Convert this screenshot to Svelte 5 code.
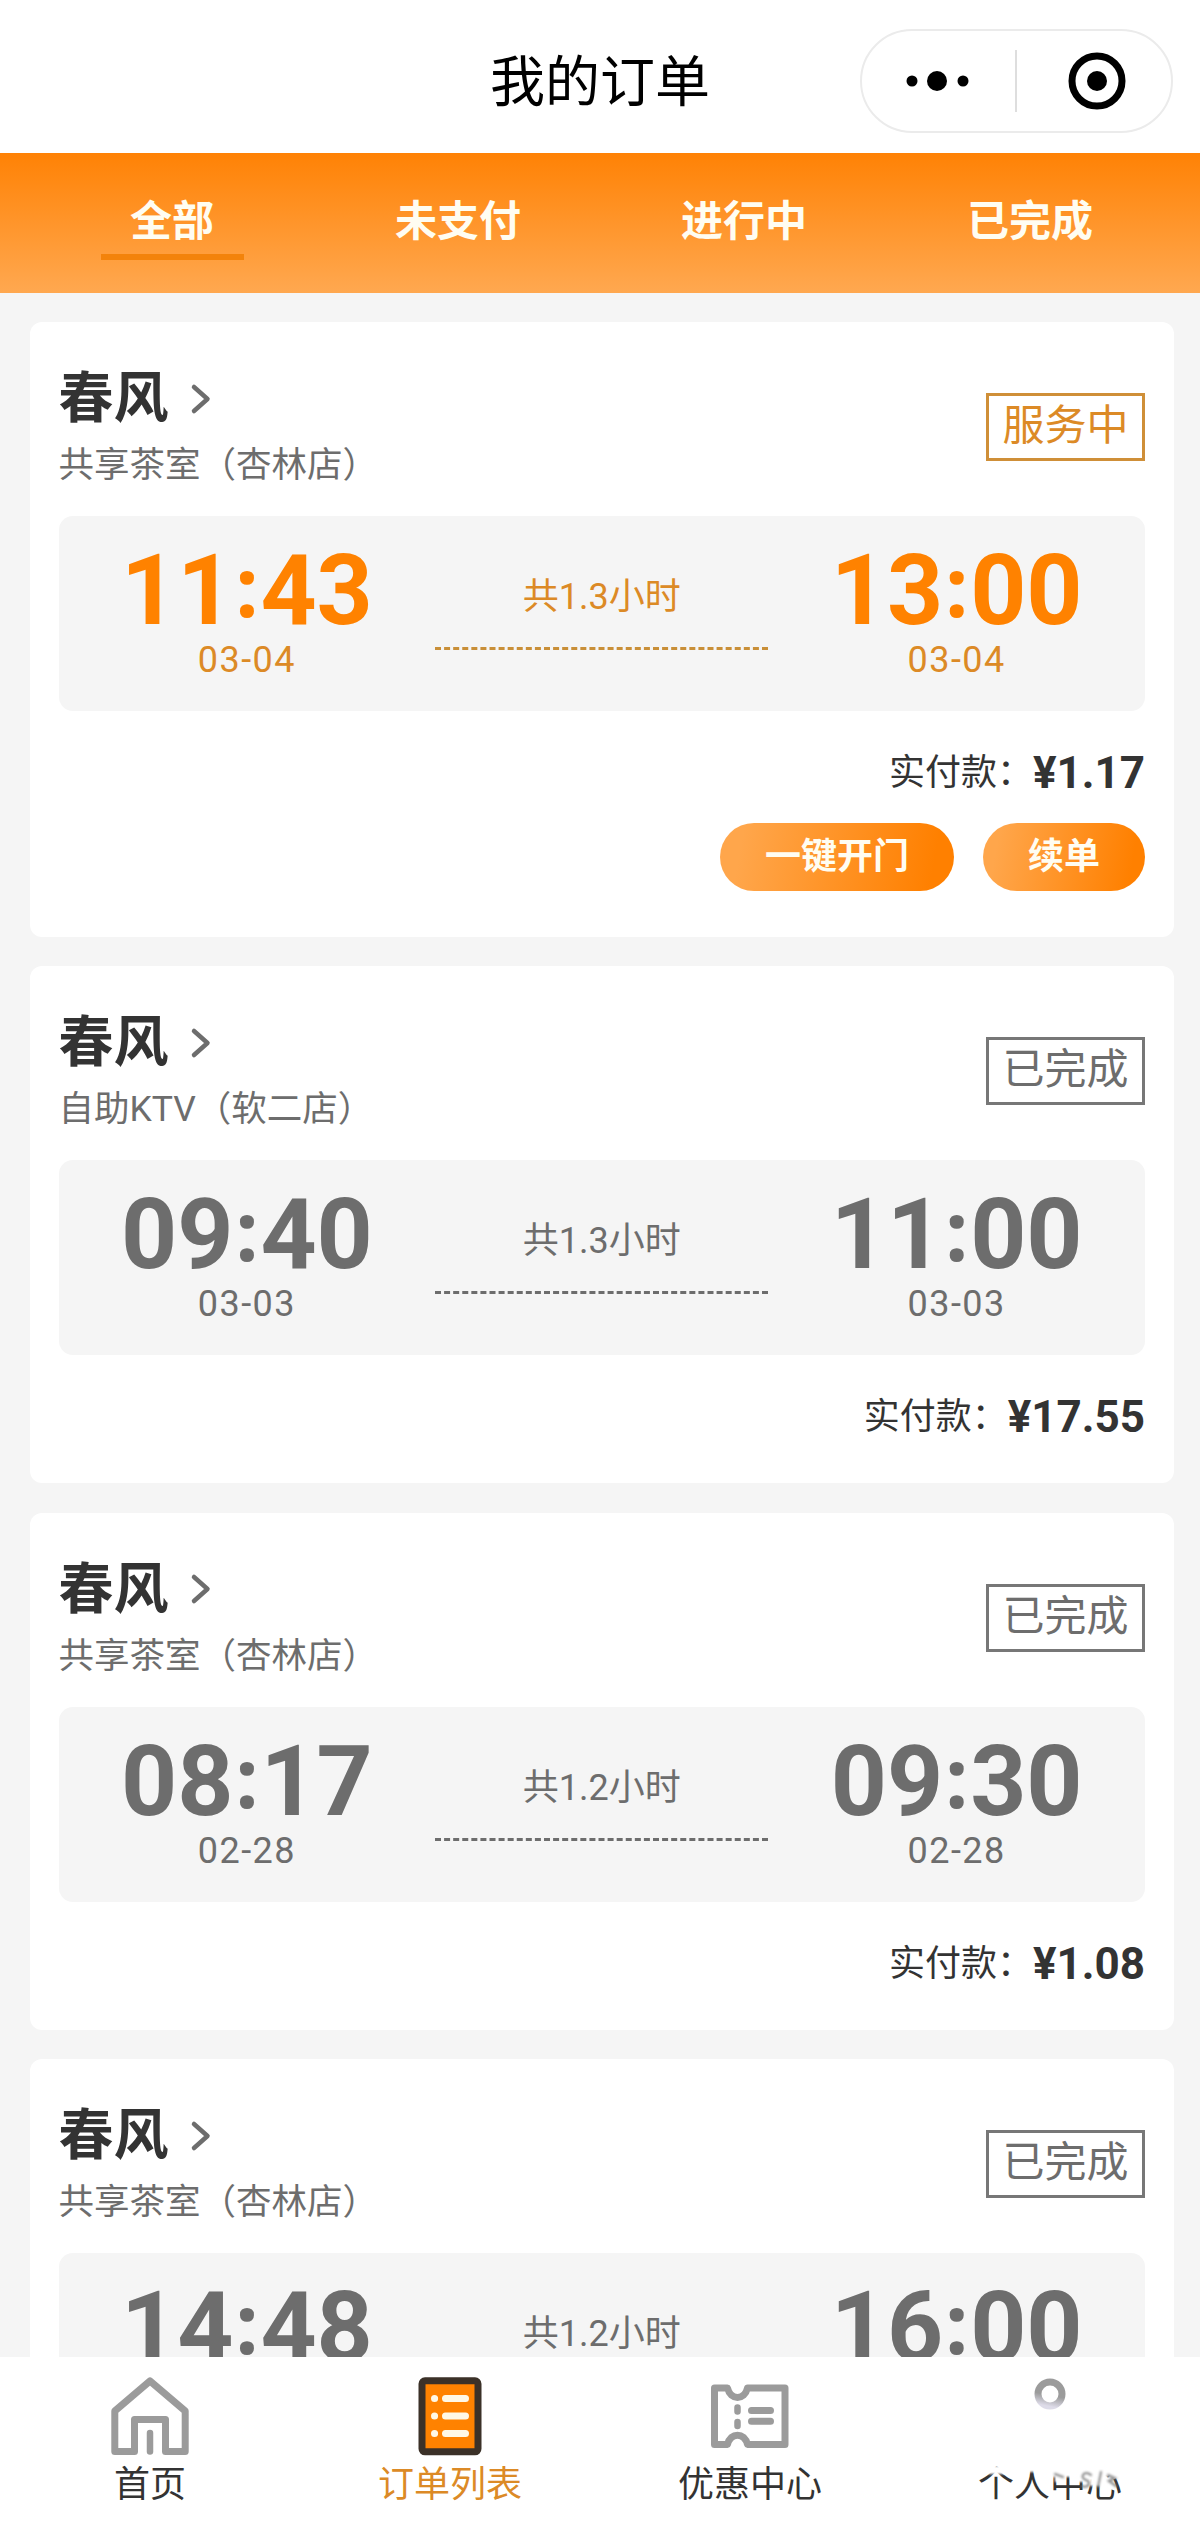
<script>
  const tabs = ["全部", "未支付", "进行中", "已完成"];
  let activeTab = "全部";

  const orders = [
    {
      name: "春风",
      shop: "共享茶室（杏林店）",
      status: "服务中",
      active: true,
      start: "11:43",
      end: "13:00",
      date: "03-04",
      hours: "1.3",
      price: "1.17"
    },
    {
      name: "春风",
      shop: "自助KTV（软二店）",
      status: "已完成",
      start: "09:40",
      end: "11:00",
      date: "03-03",
      hours: "1.3",
      price: "17.55"
    },
    {
      name: "春风",
      shop: "共享茶室（杏林店）",
      status: "已完成",
      start: "08:17",
      end: "09:30",
      date: "02-28",
      hours: "1.2",
      price: "1.08"
    },
    {
      name: "春风",
      shop: "共享茶室（杏林店）",
      status: "已完成",
      start: "14:48",
      end: "16:00",
      hours: "1.2"
    }
  ];

  const nav = [
    { icon: "home", label: "首页" },
    { icon: "list", label: "订单列表" },
    { icon: "ticket", label: "优惠中心" },
    { icon: "user", label: "个人中心" }
  ];
  let activeNav = "list";
</script>

<style>
  :global(body) {
    margin: 0;
  }

  * {
    box-sizing: border-box;
  }

  .page {
    display: flex;
    flex-direction: column;
    width: 1200px;
    height: 2525px;
    overflow: hidden;
    color: #333;
    background: #f5f5f5;
    font-family: Roboto, "Noto Sans CJK SC", sans-serif;
    font-size: 36px;
    line-height: 1;
  }

  button {
    padding: 0;
    border: 0;
    color: inherit;
    background: none;
    font: inherit;
  }

  header {
    display: grid;
    flex: none;
    grid-template-columns: 1fr auto 1fr;
    align-items: center;
    height: 153px;
    padding: 8px 27px 0;
    color: #000;
    background: #fff;
  }

  h1 {
    grid-column: 2;
    margin: 4px 0 0;
    font-size: 55px;
    font-weight: 400;
  }

  .capsule {
    justify-self: end;
    display: block;
    width: 313px;
    height: 104px;
  }

  .tabs {
    display: flex;
    flex: none;
    height: 140px;
    padding: 0 27px 0 29px;
    background: linear-gradient(#ff8205, #ffa850);
  }

  .tab {
    display: flex;
    flex: 1;
    flex-direction: column;
    align-items: center;
    padding-top: 48px;
    color: #fffdf2;
    font-size: 42px;
    font-weight: 700;
  }

  .tab.current::after {
    content: "";
    width: 143px;
    height: 6px;
    margin-top: 11px;
    background: #f3830b;
  }

  main {
    display: flex;
    flex: 1;
    flex-direction: column;
    gap: 29.400px;
    min-height: 0;
    padding: 29px 26px 0 29.500px;
    overflow: hidden;
  }

  .card {
    flex: none;
    height: 517px;
    padding: 49px 29px 0;
    border-radius: 12px;
    background: #fff;
  }

  .card.active {
    height: 615px;
  }

  .top {
    display: flex;
    align-items: flex-start;
    justify-content: space-between;
    height: 145px;
  }

  .name {
    display: flex;
    align-items: center;
    gap: 21px;
    color: #333;
    font-size: 55px;
    font-weight: 700;
  }

  .name svg {
    width: 22px;
    height: 32px;
  }

  .shop {
    margin-top: 22px;
    color: #6d6d6d;
    font-size: 35.500px;
  }

  .status {
    width: 159px;
    height: 68px;
    margin-top: 22px;
    border: 3px solid #777;
    color: #6d6d6d;
    font-size: 42px;
    line-height: 60px;
    text-align: center;
  }

  .active .status {
    border-color: #cf8f38;
    color: #dc8a26;
  }

  .period {
    display: flex;
    height: 195px;
    border-radius: 14px;
    color: #6d6d6d;
    background: #f5f5f5;
    text-align: center;
  }

  .active .period {
    color: #dc8a26;
  }

  .point {
    flex: 1;
    padding-top: 26px;
  }

  .time {
    display: flex;
    justify-content: center;
    font-size: 98px;
    font-weight: 700;
  }

  .active .time {
    color: #ff8200;
  }

  /* round dots, centred on the digit height */
  .colon {
    width: 27px;
    font-family: "Open Sans", sans-serif;
    font-size: 82px;
    line-height: 86px;
  }

  .date {
    margin-top: 2px;
    letter-spacing: 1.500px;
  }

  .span {
    width: 333px;
    padding-top: 63px;
  }

  .span::after {
    content: "";
    display: block;
    margin-top: 32px;
    border-top: 3px dashed #6d6d6d;
  }

  .active .span::after {
    border-color: #c98f38;
  }

  .pay {
    display: flex;
    align-items: center;
    justify-content: flex-end;
    height: 52px;
    margin-top: 36px;
  }

  .pay strong {
    font-size: 44px;
  }

  .actions {
    display: flex;
    justify-content: flex-end;
    gap: 29px;
    margin-top: 24px;
  }

  .actions button {
    height: 68px;
    padding: 0 45px;
    border-radius: 34px;
    color: #fffdf2;
    background: linear-gradient(100deg, #ffa64b 10%, #ff8000 90%);
    font-weight: 700;
  }

  footer {
    display: flex;
    flex: none;
    height: 168px;
    background: #fff;
  }

  .item {
    position: relative;
    display: flex;
    flex: 1;
    flex-direction: column;
    align-items: center;
    padding-top: 19px;
  }

  .icon {
    width: 80px;
    height: 80px;
    margin-bottom: 11px;
  }

  .item.current {
    color: #dc8a26;
  }

  .smudge {
    position: absolute;
    top: 105px;
    left: 78px;
    width: 144px;
    height: 40px;
  }
</style>

<div class="page">
  <header>
    <h1>我的订单</h1>
    <svg class="capsule" viewBox="0 0 313 104">
      <rect x="1" y="1" width="311" height="102" rx="51" fill="none" stroke="#ebebeb" stroke-width="2" />
      <path d="M156 21v62" stroke="#dedede" stroke-width="2" />
      <circle cx="52" cy="52" r="5.500" />
      <circle cx="77" cy="52" r="10" />
      <circle cx="103" cy="52" r="5.500" />
      <circle cx="237" cy="52" r="25" fill="none" stroke="#000" stroke-width="7" />
      <circle cx="237" cy="52" r="10" />
    </svg>
  </header>

  <nav class="tabs">
    {#each tabs as tab}
      <button
        class="tab"
        class:current={tab === activeTab}
        on:click={() => (activeTab = tab)}>
        {tab}
      </button>
    {/each}
  </nav>

  <main>
    {#each orders as order}
      <section class="card" class:active={order.active}>
        <div class="top">
          <div>
            <div class="name">
              {order.name}
              <svg viewBox="0 0 22 32" fill="none" stroke="#6d6d6d" stroke-width="4.500" stroke-linecap="round" stroke-linejoin="round">
                <path d="M4 4l13.500 12-13.500 12" />
              </svg>
            </div>
            <div class="shop">{order.shop}</div>
          </div>
          <div class="status">{order.status}</div>
        </div>
        <div class="period">
          <div class="point">
            <div class="time">
              {order.start.slice(0, 2)}<span class="colon">:</span>{order.start.slice(3)}
            </div>
            {#if order.date}
              <div class="date">{order.date}</div>
            {/if}
          </div>
          <div class="span">共{order.hours}小时</div>
          <div class="point">
            <div class="time">
              {order.end.slice(0, 2)}<span class="colon">:</span>{order.end.slice(3)}
            </div>
            {#if order.date}
              <div class="date">{order.date}</div>
            {/if}
          </div>
        </div>
        {#if order.price}
          <div class="pay">实付款：<strong>¥{order.price}</strong></div>
        {/if}
        {#if order.active}
          <div class="actions">
            <button>一键开门</button>
            <button>续单</button>
          </div>
        {/if}
      </section>
    {/each}
  </main>

  <footer>
    {#each nav as { icon, label }}
      <button
        class="item"
        class:current={icon === activeNav}
        on:click={() => (activeNav = icon)}>
        <svg class="icon" viewBox="0 0 80 80" fill="none" stroke="#9b9b9b" stroke-width="7" stroke-linecap="round" stroke-linejoin="round">
          {#if icon === "home"}
            <path d="M40 5L4.800 35v40.500H24.500V43.500h31v32h19.700V35z" />
            <path d="M40 57v18.500" stroke-width="6.500" />
          {:else if icon === "list"}
            <rect x="12" y="4.800" width="56" height="71" rx="3" fill="#ff8200" stroke="#3b3128" />
            <path d="M35.500 22.500h20M35.500 40h20M35.500 57.500h20" stroke="#fff8e6" />
            <path d="M24.500 22.500h.1M24.500 40h.1M24.500 57.500h.1" stroke="#fff8e6" />
          {:else if icon === "ticket"}
            <path d="M4.500 12H17.500c3 12.500 17 12.500 20 0H75v56.500H37.500c-3-12.500-17-12.500-20 0H4.500z" />
            <path d="M27.500 31.500v4M27.500 46v4" stroke-width="6.500" />
            <path d="M41.500 34.500h19M41.500 45.300h19" />
          {:else}
            <defs>
              <linearGradient id="fade" x1="0.600" y1="0" x2="0.400" y2="1">
                <stop offset="0.550" stop-color="#9b9b9b" />
                <stop offset="1" stop-color="#dddbe8" />
              </linearGradient>
            </defs>
            <circle cx="40" cy="18" r="12" stroke="url(#fade)" />
          {/if}
        </svg>
        {label}
        {#if icon === "user"}
          <svg class="smudge" viewBox="0 0 144 40" fill="none">
            <defs>
              <filter id="soft" x="-20%" y="-20%" width="140%" height="140%">
                <feGaussianBlur stdDeviation="1.200" />
              </filter>
            </defs>
            <g filter="url(#soft)">
              <path d="M10 4h18v8H10zM46 2h18v8H46zM68 1h74v14H68zM77 12h10v8H77zM93 12h18v8H93zM112 10h14v14H112z" fill="#fff" />
              <g stroke="#777" stroke-width="2.500" stroke-linecap="round">
                <path d="M77 12l8 3M113 13c-7-6-12 3-5 5 7 2 1 9-4 6M123 10l-3 15M130 13l7 3-6 3 7 5" opacity="0.800" />
              </g>
            </g>
          </svg>
        {/if}
      </button>
    {/each}
  </footer>
</div>
